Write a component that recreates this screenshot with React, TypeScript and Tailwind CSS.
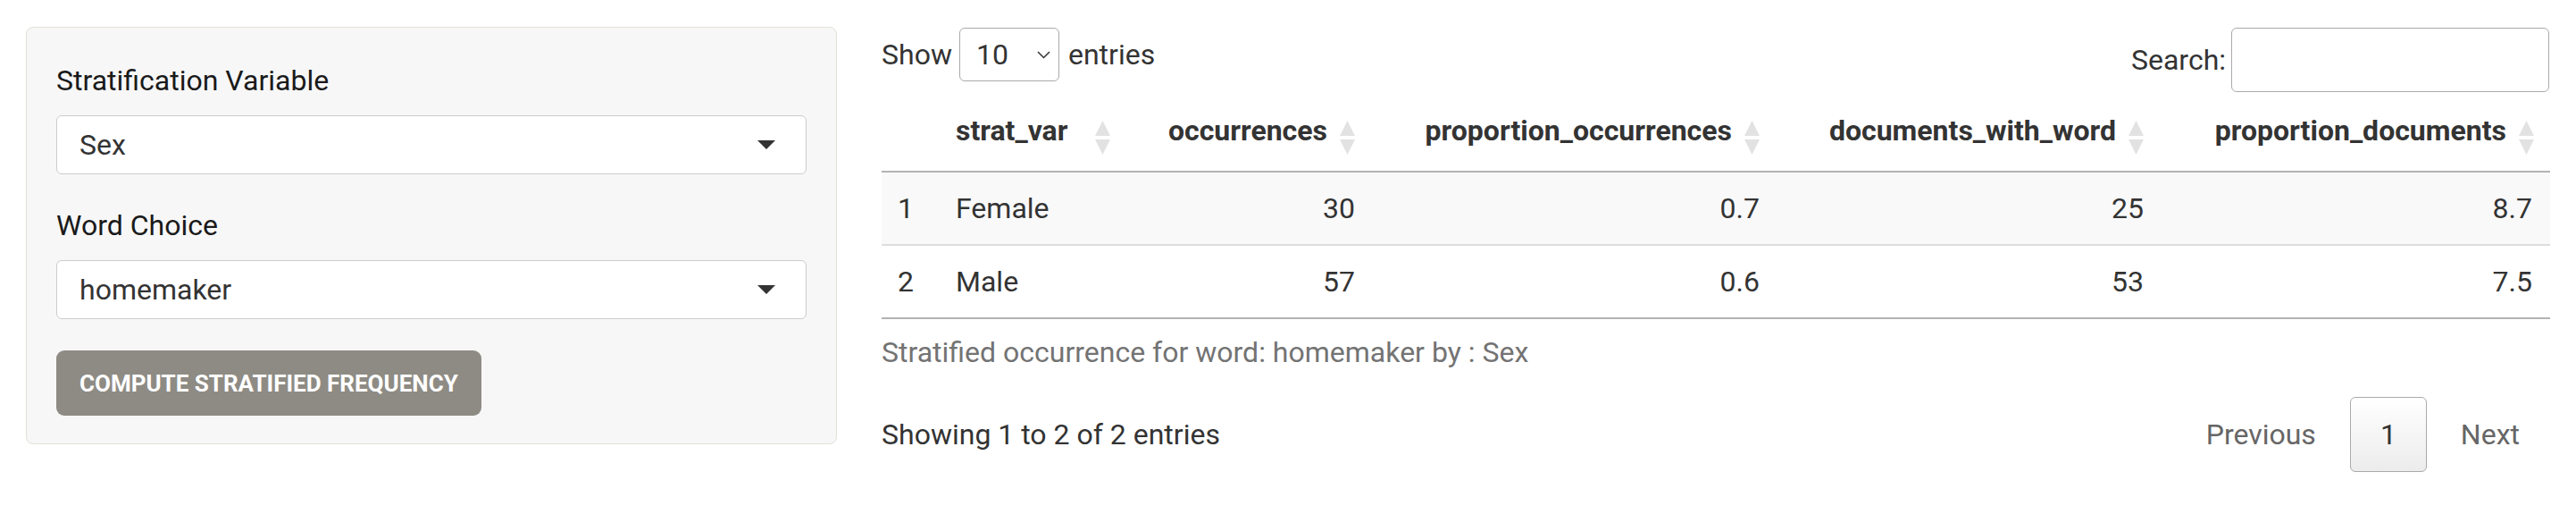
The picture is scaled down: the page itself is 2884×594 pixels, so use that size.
import React from "react"

const GRID = "grid grid-cols-[65px_209px_274px_453px_430px_437px]"

const rows = [
  { idx: 1, strat: "Female", occ: "30", propOcc: "0.7", docs: "25", propDocs: "8.7" },
  { idx: 2, strat: "Male", occ: "57", propOcc: "0.6", docs: "53", propDocs: "7.5" },
]

function SortIcon() {
  return (
    <svg width="17" height="38" viewBox="0 0 17 38" className="mt-[32px] shrink-0">
      <path d="M8.5 0 L17 17 L0 17 Z" fill="#e2e2e2" />
      <path d="M0 21 L17 21 L8.5 38 Z" fill="#e2e2e2" />
    </svg>
  )
}

function Caret() {
  return (
    <svg width="20" height="10" viewBox="0 0 20 10" className="shrink-0">
      <path d="M0 0 H20 L10 10 Z" fill="#333333" />
    </svg>
  )
}

function SelectInput({ value }: { value: string }) {
  return (
    <div className="flex h-[66px] items-center justify-between rounded-[6px] border border-[#cccccc] bg-white pl-[25px] pr-[34px] text-[#333333]">
      <span>{value}</span>
      <Caret />
    </div>
  )
}

function HeaderLeft({ label }: { label: string }) {
  return (
    <div className="flex h-full items-start justify-between px-[18px]">
      <span className="pt-[19px]">{label}</span>
      <SortIcon />
    </div>
  )
}

function HeaderRight({ label }: { label: string }) {
  return (
    <div className="flex h-full items-start justify-end gap-[14px] pr-[18px]">
      <span className="pt-[19px]">{label}</span>
      <SortIcon />
    </div>
  )
}

export default function App() {
  return (
    <div className="flex gap-[50px] bg-white px-[29px] pt-[30px] pb-[60px] font-['Roboto',sans-serif] text-[32px] leading-[48px] text-[#333333]">
      {/* sidebar */}
      <div className="flex w-[908px] shrink-0 flex-col items-start self-start rounded-[8px] border border-[#e3e0d7] bg-[#f7f7f7] px-[33px] pt-[35px] pb-[31px]">
        <div className="mb-[15px] text-[#1a1a1a]">Stratification Variable</div>
        <div className="w-full">
          <SelectInput value="Sex" />
        </div>
        <div className="mt-[33px] mb-[15px] text-[#1a1a1a]">Word Choice</div>
        <div className="w-full">
          <SelectInput value="homemaker" />
        </div>
        <button className="mt-[35px] flex h-[73px] items-center rounded-[9px] bg-[#8e8b84] px-[26px] text-[26px] font-bold text-white uppercase">
          Compute Stratified Frequency
        </button>
      </div>

      {/* table area */}
      <div className="w-[1868px] shrink-0 pt-[1px]">
        <div className="flex items-start justify-between">
          <div className="flex h-[60px] items-center">
            <span>Show</span>
            <div className="ml-[8px] flex h-[60px] w-[112px] items-center justify-between rounded-[6px] border border-[#aaaaaa] bg-white pl-[18px] pr-[9px]">
              <span>10</span>
              <svg width="15" height="9" viewBox="0 0 15 9" className="shrink-0">
                <path d="M1 1 L7.5 7.5 L14 1" fill="none" stroke="#333333" strokeWidth="1.5" />
              </svg>
            </div>
            <span className="ml-[10px]">entries</span>
          </div>
          <div className="mr-[1px] flex items-center">
            <span>Search:</span>
            <div className="ml-[6px] h-[72px] w-[356px] rounded-[6px] border border-[#aaaaaa] bg-white" />
          </div>
        </div>

        <div className={`${GRID} h-[90px] border-b-2 border-[#b3b3b3] font-bold`}>
          <div />
          <HeaderLeft label="strat_var" />
          <HeaderRight label="occurrences" />
          <HeaderRight label="proportion_occurrences" />
          <HeaderRight label="documents_with_word" />
          <HeaderRight label="proportion_documents" />
        </div>

        {rows.map((r, i) => (
          <div
            key={r.idx}
            className={`${GRID} h-[82px] items-center border-b-2 ${
              i === 0 ? "border-[#dddddd] bg-[#f9f9f9]" : "border-[#b3b3b3] bg-white"
            }`}
          >
            <div className="pl-[18px]">{r.idx}</div>
            <div className="pl-[18px]">{r.strat}</div>
            <div className="pr-[18px] text-right">{r.occ}</div>
            <div className="pr-[18px] text-right">{r.propOcc}</div>
            <div className="pr-[18px] text-right">{r.docs}</div>
            <div className="pr-[20px] text-right">{r.propDocs}</div>
          </div>
        ))}

        <div className="mt-[13px] text-[#737373]">Stratified occurrence for word: homemaker by : Sex</div>

        <div className="mt-[26px] flex items-center justify-between">
          <div>Showing 1 to 2 of 2 entries</div>
          <div className="flex items-center text-[#666666]">
            <span className="px-[34px]">Previous</span>
            <span className="ml-[4px] flex h-[84px] items-center rounded-[6px] border border-[#aaaaaa] bg-linear-to-b from-white to-[#ececec] px-[33px] text-[#333333]">
              1
            </span>
            <span className="ml-[4px] px-[34px]">Next</span>
          </div>
        </div>
      </div>
    </div>
  )
}
